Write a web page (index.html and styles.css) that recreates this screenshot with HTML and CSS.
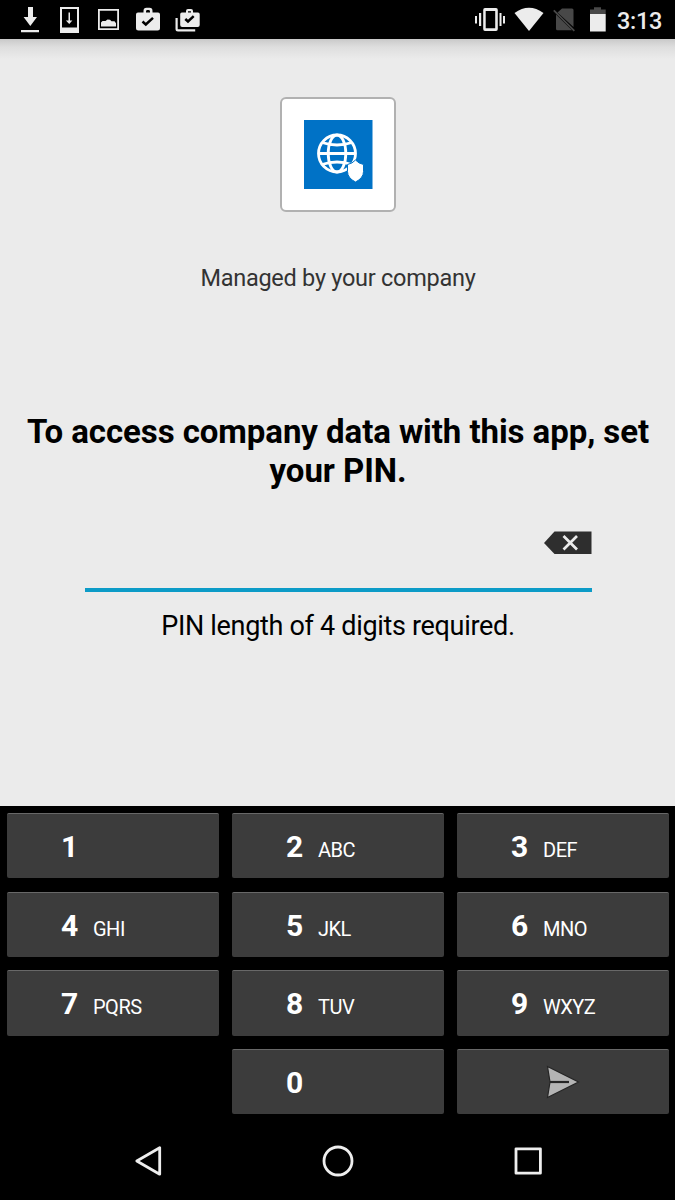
FILE: index.html
```html
<!DOCTYPE html>
<html lang="en">
<head>
<meta charset="utf-8">
<title>Set your PIN</title>
<link rel="stylesheet" href="styles.css">
</head>
<body>
<header class="status">
  <div class="notifications">
    <svg class="icon" viewBox="16 0 28 39"><path d="M28 7h5v10h4l-6.700 9-6.700-9H28zM21 30h18v2.300H21z"/></svg>
    <svg class="icon" viewBox="55 0 28 39"><path fill-rule="evenodd" d="M60 7h19v26H60zM62 9v18.500h15V9z"/><path d="M68.500 12.500h1.500v8h2.400L69.200 24l-3.300-3.500h2.600z"/></svg>
    <svg class="icon" viewBox="94 0 28 39"><path fill-rule="evenodd" d="M98 9h21v21H98zM99.800 10.800v17.400h17.400V10.800z"/><path d="M101 26.500v-4l1.500-1.500h3l2-1.500 2.500.3 1.500 1.500h3l1.500 2v3.200z"/></svg>
    <svg class="icon" viewBox="133 0 28 39"><path fill-rule="evenodd" d="M143.500 12.500V11q0-3.300 3-3.300h3q3 0 3 3.300v1.500h5.500q2 0 2 2V28q0 2.500-2.500 2.500h-19Q136 30.500 136 28V14.500q0-2 2-2zM146 12.500h4v-1q0-1.500-1-1.500h-2q-1 0-1 1.500z"/><path class="cut" d="m142.500 21.500 3.300 3 7.200-6.700"/></svg>
    <svg class="icon" viewBox="172 0 28 39"><path fill-rule="evenodd" d="M186 12.500V11q0-2 2-2h3q2 0 2 2v1.500h5q1.700 0 1.700 1.700V25q0 2-2 2h-15.500q-2 0-2-2V14.200q0-1.700 1.700-1.700zM188 12.500h3v-1.300h-3z"/><path class="cut" d="m185.300 19 2.700 2.500 5.700-5.300"/><path d="M175.500 18h2.200v11.200h17.500v2.300H178q-2.500 0-2.500-2.500z"/></svg>
  </div>
  <div class="system">
    <svg class="icon wide" viewBox="474 0 32 39"><path fill-rule="evenodd" d="M485 8h11q1.800 0 1.800 2v19q0 2-1.800 2h-11q-1.800 0-1.800-2V10q0-2 1.800-2zM485.700 11v17.300h9.500V11z"/><path d="M475 16h2v7.500h-2zM479 13h2.200v13H479zM499.500 13h2v13h-2zM503 16h2v7.500h-2z"/></svg>
    <svg class="icon wide" viewBox="512 0 32 39"><path d="M514.500 13Q529 2.500 543.500 13L529 31z"/></svg>
    <svg class="icon wide" viewBox="550 0 32 39"><path class="muted" d="M562 8.500h10q1.500 0 1.500 1.500v17L557.500 12.500zM556 14.500 572 30.300h-14.500q-1.500 0-1.500-1.500z"/><path class="slash" d="m553.800 10.300 20.500 20.500"/></svg>
    <svg class="icon narrow" viewBox="588 0 20 39"><path class="muted" d="M590 14V9.500h4V7.300h7v2.200h4.700V14z"/><path d="M590 14h15.700v17.500H590z"/></svg>
    <span class="time">3:13</span>
  </div>
</header>
<main class="content">
  <div class="app-icon">
    <svg class="logo" viewBox="0 0 69 69"><path class="logo-bg" d="M0 0h68.500v69H0z"/><g class="globe"><circle cx="33" cy="33.500" r="18.500"/><ellipse cx="33" cy="33.500" rx="8.800" ry="18.500"/><path d="M14.500 33.500h37M18 22.500q15 5 30 0M18 44.500q15-5 30 0"/></g><path class="shield" d="M51.500 40q3 3.500 8 4.500v7q0 6.500-8 10.500-8-4-8-10.500v-7q5-1 8-4.500z"/></svg>
  </div>
  <p class="managed">Managed by your company</p>
  <h1 class="heading">To access company data with this app, set<br>your PIN.</h1>
  <div class="pin-field">
    <svg class="clear" viewBox="0 0 48 24"><path class="clear-bg" d="M10.500.500H47.500v22.500H10.500L0 12z"/><path class="clear-x" d="m19.500 5 13.500 13.500M33 5 19.500 18.500"/></svg>
  </div>
  <p class="hint">PIN length of 4 digits required.</p>
</main>
<section class="keypad">
  <div class="key"><b class="digit">1</b></div>
  <div class="key"><b class="digit">2</b><span class="letters">ABC</span></div>
  <div class="key"><b class="digit">3</b><span class="letters">DEF</span></div>
  <div class="key"><b class="digit">4</b><span class="letters">GHI</span></div>
  <div class="key"><b class="digit">5</b><span class="letters">JKL</span></div>
  <div class="key"><b class="digit">6</b><span class="letters">MNO</span></div>
  <div class="key"><b class="digit">7</b><span class="letters">PQRS</span></div>
  <div class="key"><b class="digit">8</b><span class="letters">TUV</span></div>
  <div class="key"><b class="digit">9</b><span class="letters">WXYZ</span></div>
  <div class="blank"></div>
  <div class="key"><b class="digit">0</b></div>
  <div class="key send"><svg class="send-icon" viewBox="0 0 34 34"><path class="arrow" d="M1.500 1.500 32.500 17l-31 15.500L4 17z"/><path class="arrow-line" d="M4 17h19"/></svg></div>
</section>
<nav class="navbar">
  <svg class="nav-icon" viewBox="0 0 34 34"><path d="M28.700 3.800v26.400L5.800 17z"/></svg>
  <svg class="nav-icon" viewBox="0 0 34 34"><circle cx="17" cy="17" r="14"/></svg>
  <svg class="nav-icon" viewBox="0 0 34 34"><path d="M5 4.800h24.400v24.400H5z"/></svg>
</nav>
</body>
</html>
```

FILE: styles.css
```css
body {
  margin: 0;
  width: 675px;
  height: 1200px;
  display: flex;
  flex-direction: column;
  overflow: hidden;
  background: #000;
  font-family: Roboto, sans-serif;
}
.status {
  box-sizing: border-box;
  height: 39px;
  padding: 0 13px 0 16px;
  display: flex;
  justify-content: space-between;
  background: #000;
}
.notifications { display: flex; gap: 11px; }
.system { display: flex; gap: 6px; }
.icon { width: 28px; height: 39px; fill: #ececec; }
.wide { width: 32px; }
.narrow { width: 20px; }
.cut { fill: none; stroke: #000; stroke-width: 2.5; }
.muted { fill: #484848; }
.slash { fill: none; stroke: #484848; stroke-width: 1.8; }
.time {
  width: 45px;
  margin-left: 3px;
  color: #ececec;
  font-size: 23.5px;
  font-weight: 500;
  letter-spacing: -0.3px;
  line-height: 42px;
  white-space: nowrap;
}
.content {
  box-sizing: border-box;
  height: 767px;
  padding-top: 58px;
  display: flex;
  flex-direction: column;
  align-items: center;
  text-align: center;
  background: linear-gradient(#c9c9c9, #dedede 8px, #ebebeb 20px);
}
.app-icon {
  box-sizing: border-box;
  width: 116px;
  height: 115px;
  margin-left: 1px;
  border: 2px solid #b1b1b1;
  border-radius: 6px;
  background: #fff;
  display: flex;
  align-items: center;
  justify-content: center;
}
.logo { width: 69px; height: 69px; }
.logo-bg { fill: #0072c6; }
.globe { fill: none; stroke: #fff; stroke-width: 2.8; }
.shield { fill: #fff; stroke: #0072c6; stroke-width: 1; }
.managed {
  margin: 50px 0 0 1px;
  font-size: 23.5px;
  line-height: 32px;
  letter-spacing: -0.27px;
  color: #333;
  white-space: nowrap;
}
.heading {
  margin: 118px 0 0 1px;
  font-size: 33px;
  font-weight: 700;
  line-height: 39px;
  letter-spacing: -0.07px;
  color: #000;
  white-space: nowrap;
}
.pin-field {
  box-sizing: border-box;
  width: 507px;
  height: 78px;
  margin: 24px 0 0 1px;
  padding-top: 17px;
  border-bottom: 4px solid #0c9bc7;
  display: flex;
  justify-content: flex-end;
  align-items: flex-start;
}
.clear { width: 48px; height: 24px; }
.clear-bg { fill: #2e2e2e; }
.clear-x { fill: none; stroke: #ebebeb; stroke-width: 2.7; }
.hint {
  margin: 16px 0 0 1px;
  font-size: 27px;
  line-height: 36px;
  letter-spacing: -0.32px;
  color: #000;
  white-space: nowrap;
}
.keypad {
  padding: 7px 6.500px 0 7px;
  display: grid;
  grid-template-columns: repeat(3, 1fr);
  grid-auto-rows: 65.300px;
  gap: 13.400px 13.500px;
}
.key {
  box-sizing: border-box;
  padding-left: 54px;
  border-top: 1px solid #686868;
  border-radius: 2px;
  background: #3c3c3c;
  color: #fff;
  display: flex;
  align-items: baseline;
}
.digit { width: 32px; font-size: 30px; line-height: 65.500px; }
.letters { font-size: 20px; letter-spacing: -0.5px; }
.send { padding: 0; align-items: center; justify-content: center; }
.send-icon { width: 34px; height: 34px; }
.arrow { fill: #b4b4b4; stroke: #252525; stroke-width: 1.2; }
.arrow-line { stroke: #252525; stroke-width: 2.2; }
.navbar {
  height: 34px;
  padding: 29.900px 130px 0 131px;
  display: flex;
  justify-content: space-between;
}
.nav-icon {
  width: 34px;
  height: 34px;
  fill: none;
  stroke: #eee;
  stroke-width: 2.8;
  stroke-linejoin: round;
}
```
